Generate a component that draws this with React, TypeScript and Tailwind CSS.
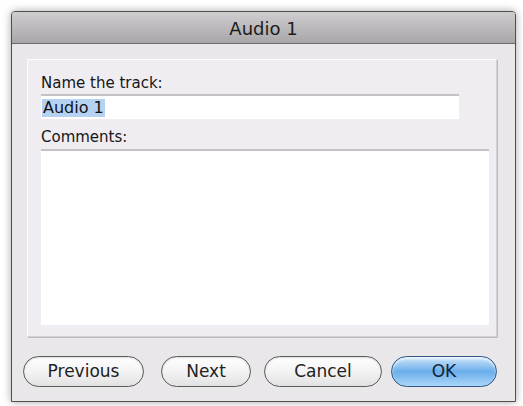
const font = "font-['Lucida_Grande','DejaVu_Sans',sans-serif]";

function PillButton({
  label,
  width,
  primary = false,
}: {
  label: string;
  width: string;
  primary?: boolean;
}) {
  return (
    <button
      className={`${width} h-[31px] rounded-full border text-[17px] leading-none pb-[1px] ${
        primary
          ? "border-[#2f5686] bg-gradient-to-b from-[#cfe5f9] via-[#6aaeea] to-[#a9d5f8] text-[#14243a] shadow-[inset_0_2px_3px_rgba(255,255,255,0.7)]"
          : "border-[#5c5c5c] bg-gradient-to-b from-[#ffffff] via-[#f3f3f3] to-[#e2e2e2] text-[#222] shadow-[inset_0_1px_2px_rgba(0,0,0,0.15)]"
      }`}
    >
      {label}
    </button>
  );
}

export default function App() {
  return (
    <div className={`w-[523px] h-[406px] bg-white pt-[11px] pl-[11px] ${font}`}>
      <div className="w-[505px] h-[391px] flex flex-col border border-[#4f4f4f] rounded-t-[4px] bg-[#e9e7ea] shadow-[0_0_8px_rgba(0,0,0,0.35)]">
        {/* title bar */}
        <div className="h-[32px] flex items-center justify-center bg-gradient-to-b from-[#cfcdd0] to-[#a8a6a9] border-b border-[#6a6a6a] rounded-t-[3px]">
          <span className="text-[18px] leading-none pt-[2px] text-[#1c1c1c]">Audio 1</span>
        </div>

        <div className="flex-1 flex flex-col px-[15px] pt-[15px]">
          {/* group box */}
          <div className="w-[470px] h-[278px] flex flex-col pl-[13px] pt-[15px] bg-[#efedf1] border border-[#d3d1d5] border-t-white border-l-white shadow-[1px_1px_0_#bdbbc0]">
            <label className="text-[15px] leading-[17px] text-[#161616]">Name the track:</label>
            <div className="mt-[2px] w-[418px] h-[25px] flex items-center pl-[1px] bg-white border-t-2 border-[#c4c2c6]">
              <span className="text-[16px] leading-[18px] text-[#111] bg-[#b5d2f3] px-[1px]">Audio 1</span>
            </div>
            <label className="mt-[10px] text-[15px] leading-[17px] text-[#161616]">Comments:</label>
            <div className="mt-[3px] w-[448px] h-[176px] bg-white border-t-2 border-[#c4c2c6]" />
          </div>

          {/* buttons */}
          <div className="mt-[19px] flex items-center">
            <div className="-ml-[4px] flex items-center gap-[17px]">
              <PillButton label="Previous" width="w-[121px]" />
              <PillButton label="Next" width="w-[90px]" />
            </div>
            <div className="ml-[13px] flex items-center gap-[9px]">
              <PillButton label="Cancel" width="w-[118px]" />
              <PillButton label="OK" width="w-[106px]" primary />
            </div>
          </div>
        </div>
      </div>
    </div>
  );
}
